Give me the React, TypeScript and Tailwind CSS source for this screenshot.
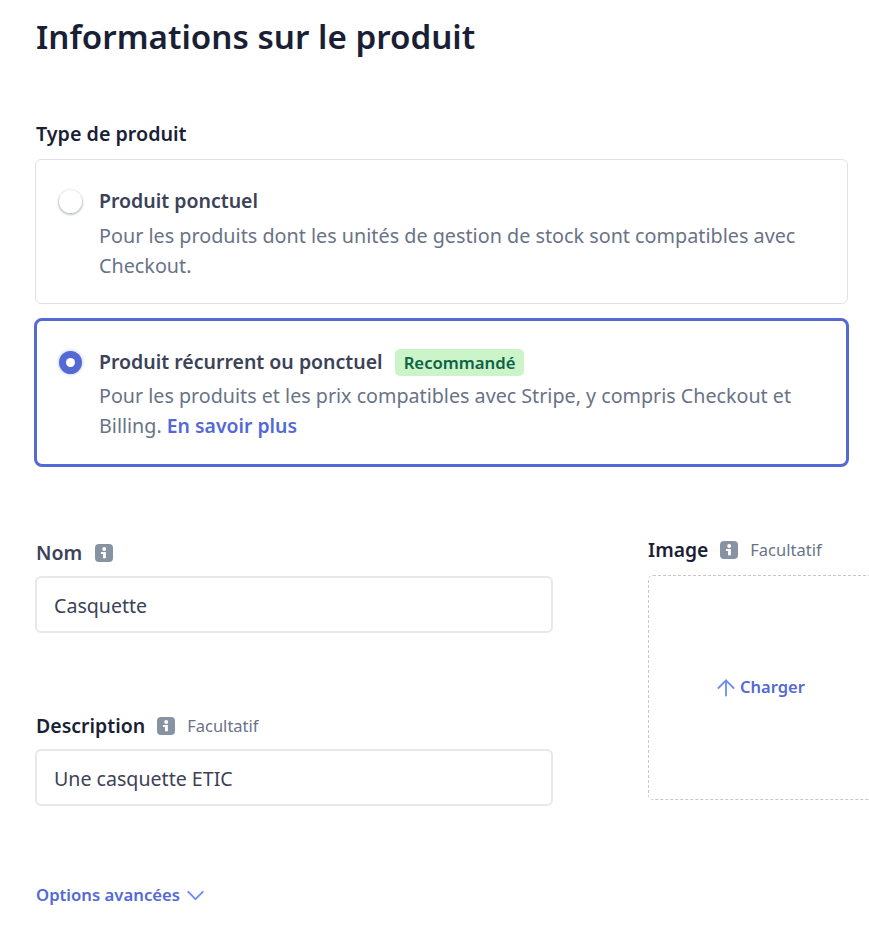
import { ArrowUp, ChevronDown } from "lucide-react";

const InfoIcon = () => (
    <svg width="18" height="18" viewBox="0 0 18 18" className="shrink-0">
        <rect width="18" height="18" rx="4" fill="#8792a2" />
        <circle cx="9.2" cy="4.9" r="2" fill="#fff" />
        <path d="M6 8h4.9v6.2H8V10H6z" fill="#fff" />
    </svg>
);

const App = () => {
    return (
        <div className="h-[940px] w-[869px] overflow-hidden bg-white pl-[35px] font-['Noto_Sans',sans-serif]">
            <h1 className="pl-px pt-[12px] text-[33.2px] leading-[50px] font-semibold text-[#1a1f36]">
                Informations sur le produit
            </h1>

            <p className="mt-[58px] pl-px text-[19.7px] leading-[28px] font-semibold text-[#1a1f36]">Type de produit</p>

            <div className="mt-[11px] flex h-[145px] w-[813px] gap-[17px] rounded-[6px] border border-[#e0e2e7] pl-[23px] pt-[27px]">
                <span className="mt-[3px] size-[23px] shrink-0 rounded-full bg-white shadow-[0_1px_2px_1px_rgba(60,66,87,0.3)]" />
                <div>
                    <p className="text-[19.5px] leading-[28px] font-semibold text-[#3c4257]">Produit ponctuel</p>
                    <p className="mt-[6px] text-[19.77px] leading-[30px] text-[#697386]">
                        Pour les produits dont les unités de gestion de stock sont compatibles avec Checkout.
                    </p>
                </div>
            </div>

            <div className="mt-[14px] -ml-px flex h-[149px] w-[815px] gap-[17px] rounded-[8px] border-[3px] border-[#5469d4] pl-[22px] pt-[27px]">
                <span className="mt-[3px] flex size-[23px] shrink-0 items-center justify-center rounded-full bg-[#5469d4] shadow-[0_0_3px_1px_rgba(84,105,212,0.25)]">
                    <span className="size-[9px] rounded-full bg-white" />
                </span>
                <div>
                    <div className="flex items-center gap-[12px]">
                        <p className="text-[19.5px] leading-[28px] font-semibold text-[#3c4257]">Produit récurrent ou ponctuel</p>
                        <span className="rounded-[5px] bg-[#cbf4c9] px-[9px] text-[16.7px] leading-[27px] font-semibold text-[#0e6245]">
                            Recommandé
                        </span>
                    </div>
                    <p className="mt-[5px] text-[19.7px] leading-[30px] text-[#697386]">
                        Pour les produits et les prix compatibles avec Stripe, y compris Checkout et Billing.{" "}
                        <a className="text-[19.4px] font-semibold text-[#5469d4]">En savoir plus</a>
                    </p>
                </div>
            </div>

            <div className="mt-[72px] flex items-start gap-[95px]">
                <div className="w-[518px] shrink-0">
                    <div className="flex items-center gap-[13px] pl-px">
                        <span className="text-[19.5px] leading-[28px] font-semibold text-[#3c4257]">Nom</span>
                        <InfoIcon />
                    </div>
                    <div className="mt-[9px] flex h-[57px] items-center rounded-[6px] border-2 border-[#e6e8eb] pl-[17px] pt-[3px] text-[19.6px] text-[#3c4257]">
                        Casquette
                    </div>

                    <div className="mt-[79px] flex items-center gap-[12px] pl-px">
                        <span className="text-[19.5px] leading-[28px] font-semibold text-[#1a1f36]">Description</span>
                        <InfoIcon />
                        <span className="text-[16.5px] text-[#697386]">Facultatif</span>
                    </div>
                    <div className="mt-[9px] flex h-[57px] items-center rounded-[6px] border-2 border-[#e6e8eb] pl-[17px] pt-[3px] text-[19.6px] text-[#3c4257]">
                        Une casquette ETIC
                    </div>
                </div>

                <div className="w-[300px] shrink-0">
                    <div className="-mt-px flex h-[24px] items-center gap-[12px]">
                        <span className="text-[19.3px] leading-[28px] font-semibold text-[#1a1f36]">Image</span>
                        <InfoIcon />
                        <span className="text-[16.5px] text-[#697386]">Facultatif</span>
                    </div>
                    <div className="mt-[13px] flex h-[225px] items-center justify-center rounded-[5px] border border-dashed border-[#c4c8cf] pr-[78px]">
                        <span className="flex h-[24px] items-center gap-[1px] text-[16.5px] font-semibold text-[#5469d4]">
                            <ArrowUp size={26} strokeWidth={1.7} className="text-[#6c8eef]" />
                            Charger
                        </span>
                    </div>
                </div>
            </div>

            <div className="mt-[77px] flex h-[24px] items-center gap-[1px] pl-px text-[16.7px] leading-[24px] font-semibold text-[#5469d4]">
                Options avancées
                <ChevronDown size={29} strokeWidth={1.6} className="text-[#6c8eef]" />
            </div>
        </div>
    );
};

export default App;
